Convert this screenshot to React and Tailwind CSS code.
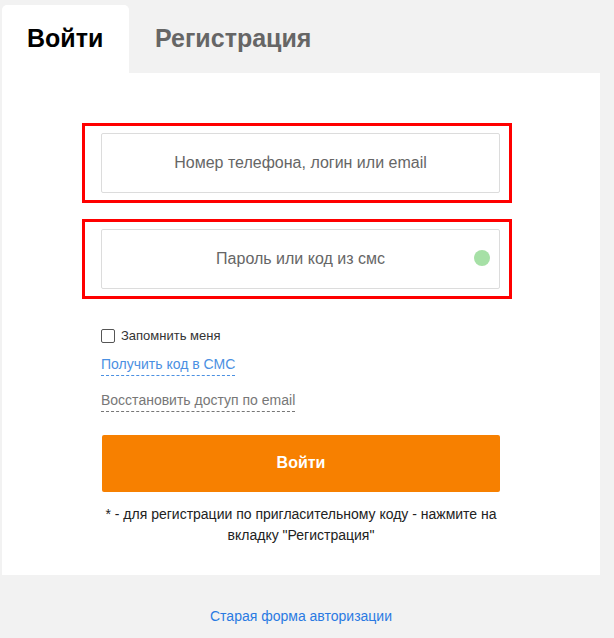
import React from 'react'

function Field({ placeholder, dot }) {
  return (
    <div className="ml-[80px] w-[430px] border-[3px] border-[#f00] pt-[7px] pb-[7px] pl-[16px] pr-[9px]">
      <div className="relative flex h-[60px] w-[399px] items-center justify-center rounded-[2px] border border-[#dcdcdc] bg-white">
        <span className="text-[16px] text-[#666]">{placeholder}</span>
        {dot && (
          <span className="absolute right-[9px] top-[20px] h-[16px] w-[16px] rounded-full bg-[#a6e0a6]" />
        )}
      </div>
    </div>
  )
}

function App() {
  return (
    <div className="min-h-[638px] bg-[#f2f2f2] font-['Liberation_Sans',Arial,sans-serif]">
      <div className="ml-[2px] w-[598px]">
        <div className="flex h-[73px] items-end">
          <div className="flex h-[68px] w-[127px] items-center rounded-t-[5px] bg-white pl-[25px]">
            <span className="text-[25px] font-bold text-black">Войти</span>
          </div>
          <div className="flex h-[68px] items-center pl-[26px]">
            <span className="text-[25px] font-bold text-[#666]">Регистрация</span>
          </div>
        </div>

        <div className="bg-white pt-[50px] pb-[29px]">
          <div className="flex flex-col gap-[16px]">
            <Field placeholder="Номер телефона, логин или email" />
            <Field placeholder="Пароль или код из смс" dot />
          </div>

          <div className="ml-[99px] mt-[27px] flex flex-col items-start">
            <label className="flex items-center gap-[6px] text-[13px] text-[#333]">
              <span className="h-[14px] w-[14px] rounded-[2px] border border-[#555] bg-white" />
              Запомнить меня
            </label>
            <a className="mt-[8px] border-b border-dashed border-[#4a90e2] text-[14px] text-[#4a90e2]">
              Получить код в СМС
            </a>
            <a className="mt-[14px] border-b border-dashed border-[#777] text-[14px] text-[#777]">
              Восстановить доступ по email
            </a>
          </div>

          <button className="ml-[100px] mt-[23px] flex h-[57px] w-[398px] items-center justify-center rounded-[2px] bg-[#f78000] text-[16px] font-bold text-white">
            Войти
          </button>

          <p className="mx-auto mt-[12px] w-[420px] text-center text-[14px] leading-[21px] text-[#222]">
            * - для регистрации по пригласительному коду - нажмите на вкладку "Регистрация"
          </p>
        </div>

        <div className="flex justify-center pt-[31px]">
          <a className="text-[14px] text-[#2a7ae2]">Старая форма авторизации</a>
        </div>
      </div>
    </div>
  )
}

export default App
